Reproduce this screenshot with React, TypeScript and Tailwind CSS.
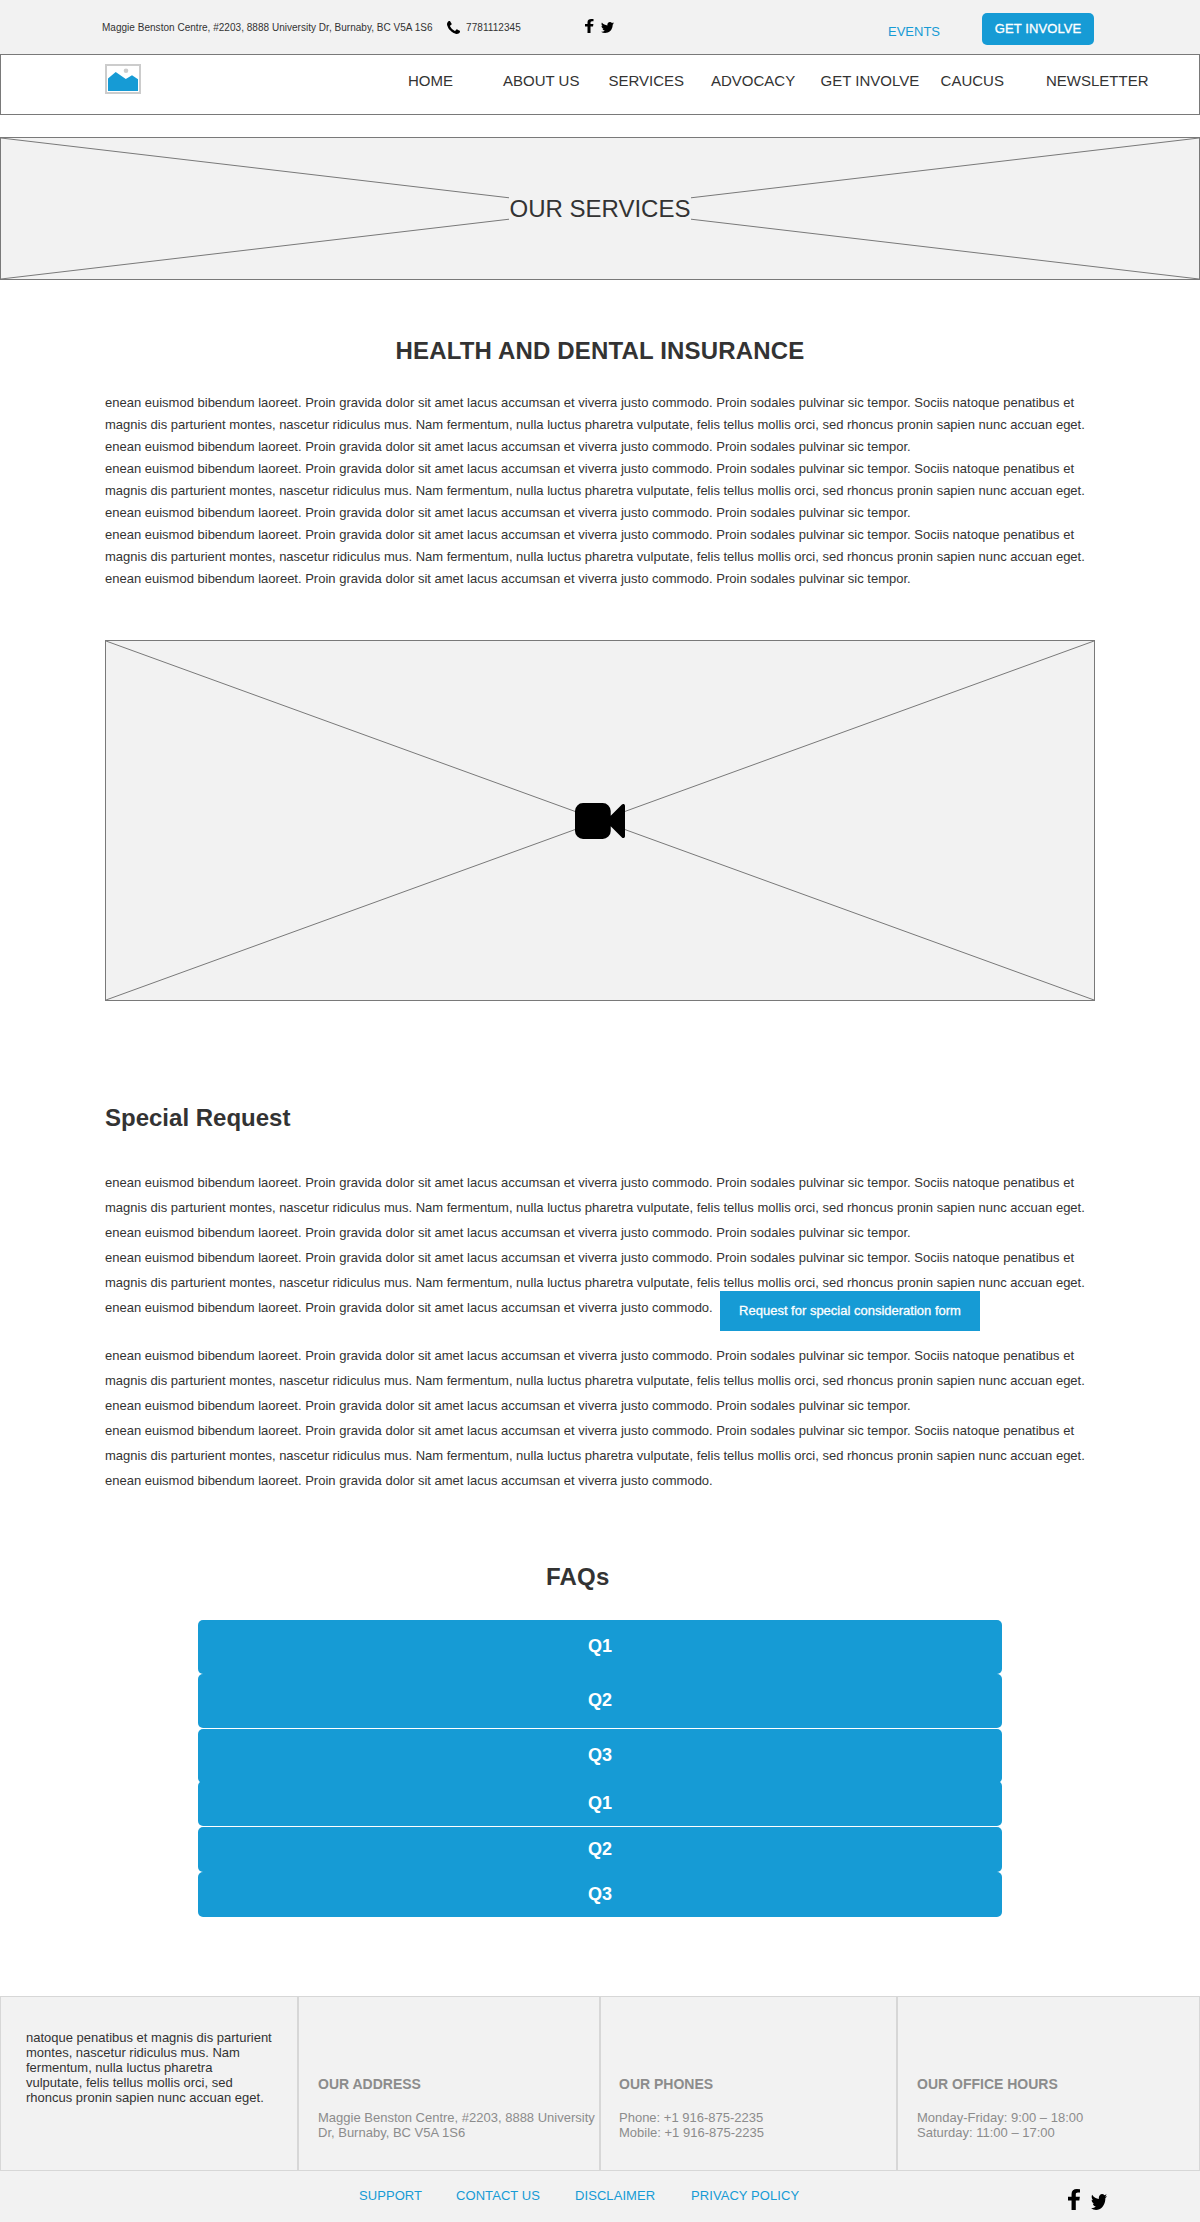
import React from "react";

const LINE_A =
  "enean euismod bibendum laoreet. Proin gravida dolor sit amet lacus accumsan et viverra justo commodo. Proin sodales pulvinar sic tempor. Sociis natoque penatibus et";
const LINE_B =
  "magnis dis parturient montes, nascetur ridiculus mus. Nam fermentum, nulla luctus pharetra vulputate, felis tellus mollis orci, sed rhoncus pronin sapien nunc accuan eget.";
const LINE_C =
  "enean euismod bibendum laoreet. Proin gravida dolor sit amet lacus accumsan et viverra justo commodo. Proin sodales pulvinar sic tempor.";
const LINE_D =
  "enean euismod bibendum laoreet. Proin gravida dolor sit amet lacus accumsan et viverra justo commodo.";

function Lines({ lines }: { lines: string[] }) {
  return (
    <>
      {lines.map((line, i) => (
        <span key={i} className="block whitespace-nowrap">
          {line}
        </span>
      ))}
    </>
  );
}

function FacebookIcon({ className }: { className: string }) {
  return (
    <svg viewBox="479 0 864 1664" preserveAspectRatio="none" className={className} fill="#000">
      <path d="M1343 12v264h-157q-86 0-116 36t-30 108v189h293l-39 296h-254v759h-306v-759h-255v-296h255v-218q0-186 104-288.5t277-102.5q147 0 228 12z" />
    </svg>
  );
}

function TwitterIcon({ className }: { className: string }) {
  return (
    <svg viewBox="108 256 1576 1280" preserveAspectRatio="none" className={className} fill="#000">
      <path d="M1684 408q-67 98-162 167 1 14 1 42 0 130-38 259.5t-115.5 248.5-184.5 210.5-258 146-323 54.5q-271 0-496-145 35 4 78 4 225 0 401-138-105-2-188-64.5t-114-159.5q33 5 61 5 43 0 85-11-112-23-185.5-111.5t-73.5-205.5v-4q68 38 146 41-66-44-105-115t-39-154q0-88 44-163 121 149 294.5 238.5t371.5 99.5q-8-38-8-74 0-134 94.5-228.5t228.5-94.5q140 0 236 102 109-21 205-78-37 115-142 178 93-10 186-50z" />
    </svg>
  );
}

function PhoneIcon({ className }: { className: string }) {
  return (
    <svg viewBox="192 128 1408 1408" className={className} fill="#000">
      <path d="M1600 1240q0 27-10 70.5t-21 68.5q-21 50-122 106-94 51-186 51-27 0-53-3.5t-57.5-12.5-47-14.5-55.5-20.5-49-18q-98-35-175-83-127-79-264-216t-216-264q-48-77-83-175-3-9-18-49t-20.5-55.5-14.5-47-12.5-57.5-3.5-53q0-92 51-186 56-101 106-122 25-11 68.5-21t70.5-10q14 0 21 3 18 6 53 76 11 19 30 54t35 63.5 31 53.5q3 4 17.5 25t21.5 35.5 7 28.5q0 20-28.5 50t-62 55-62 53-28.5 46q0 9 5 22.5t8.5 20.5 14 24 11.5 19q76 137 174 235t235 174q2 1 19 11.5t24 14 20.5 8.5 22.5 5q18 0 46-28.5t53-62 55-62 50-28.5q14 0 28.5 7t35.5 21.5 25 17.5q25 15 53.5 31t63.5 35 54 30q70 35 76 53 3 7 3 21z" />
    </svg>
  );
}

function VideoIcon({ className }: { className: string }) {
  return (
    <svg viewBox="0 256 1792 1280" preserveAspectRatio="none" className={className} fill="#000">
      <path d="M1792 352v1088q0 42-39 59-13 5-25 5-27 0-45-19l-403-403v166q0 119-84.5 203.5t-203.5 84.5h-704q-119 0-203.5-84.5t-84.5-203.5v-704q0-119 84.5-203.5t203.5-84.5h704q119 0 203.5 84.5t84.5 203.5v165l403-402q18-19 45-19 12 0 25 5 39 17 39 59z" />
    </svg>
  );
}

function Logo() {
  return (
    <svg viewBox="0 0 36 30" className="mt-[9px] ml-[104px] h-[30px] w-9">
      <rect x="1" y="1" width="34" height="28" fill="#fff" stroke="#ccc" strokeWidth="2" />
      <circle cx="21" cy="6.7" r="2.3" fill="#ccc" />
      <path d="M3 14.5 10.7 8 20.8 15 27 11.3 33 15.3V27H3z" fill="#169bd5" />
    </svg>
  );
}

/* Placeholder panel: a bordered box with two crossing diagonals behind its content. */
function Placeholder({ className, children }: { className: string; children: React.ReactNode }) {
  return (
    <div className={"relative flex justify-center border border-[#797979] bg-[#f2f2f2] " + className}>
      <svg
        className="absolute inset-0 h-full w-full"
        viewBox="0 0 100 100"
        preserveAspectRatio="none"
        stroke="#797979"
        strokeWidth="1"
      >
        <path d="M0 0 100 100M0 100 100 0" vectorEffect="non-scaling-stroke" fill="none" />
      </svg>
      {children}
    </div>
  );
}

function Column({ title, lines, className }: { title: string; lines: string[]; className: string }) {
  return (
    <div className={"border border-[#d7d7d7] pt-[79px] whitespace-nowrap text-[#8c8c8c] " + className}>
      <h3 className="text-[14px] leading-4 font-bold">{title}</h3>
      <p className="mt-[18px] text-[13px] leading-[15px]">
        <Lines lines={lines} />
      </p>
    </div>
  );
}

const faqs = [
  { label: "Q1", cls: "h-[54px]" },
  { label: "Q2", cls: "h-[54px]" },
  { label: "Q3", cls: "mt-px h-[54px]" },
  { label: "Q1", cls: "-mt-[2px] h-[45px]" },
  { label: "Q2", cls: "mt-px h-[45px]" },
  { label: "Q3", cls: "h-[45px]" },
];

export default function App() {
  return (
    <div className="h-[2222px] w-[1200px] overflow-hidden bg-white font-['Liberation_Sans',Arial,sans-serif] text-[#333]">
      <div className="flex h-[54px] items-start bg-[#f2f2f2] whitespace-nowrap">
        <span className="mt-[22px] ml-[102px] w-[345px] text-[10px] leading-3 tracking-[0.025px]">
          Maggie Benston Centre, #2203, 8888 University Dr, Burnaby, BC V5A 1S6
        </span>
        <PhoneIcon className="mt-[21px] h-[13px] w-[13px]" />
        <span className="mt-[22px] ml-[6px] w-[119px] text-[10px] leading-3 tracking-[0.07px]">7781112345</span>
        <FacebookIcon className="mt-[19px] h-[14px] w-[8.5px]" />
        <TwitterIcon className="mt-[22px] ml-[7.5px] h-[11px] w-[13px]" />
        <a className="mt-6 ml-[274px] w-[94px] text-[13px] leading-[15px] text-[#169bd5]">EVENTS</a>
        <button className="mt-[13px] h-8 w-28 rounded-[5px] bg-[#169bd5] pb-[2px] text-[13px] leading-[15px] tracking-[0.1px] text-white [-webkit-text-stroke:0.3px_white]">
          GET INVOLVE
        </button>
      </div>

      <header className="flex h-[61px] items-start border border-[#797979]">
        <Logo />
        <nav className="mt-[17px] ml-[267px] grid grid-cols-[95px_105.5px_102.5px_109.6px_120px_105.4px_auto] text-[15px] leading-[17px] whitespace-nowrap">
          <a>HOME</a>
          <a>ABOUT US</a>
          <a>SERVICES</a>
          <a>ADVOCACY</a>
          <a>GET INVOLVE</a>
          <a>CAUCUS</a>
          <a>NEWSLETTER</a>
        </nav>
      </header>

      <Placeholder className="mt-[22px] h-[143px] items-center">
        <h1 className="relative h-[23px] w-[182px] bg-[#f2f2f2] text-center text-[24px] leading-[23px] whitespace-nowrap">
          OUR SERVICES
        </h1>
      </Placeholder>

      <main>
        <h2 className="mt-[57px] text-center text-[24px] leading-7 font-bold tracking-[0.16px]">
          HEALTH AND DENTAL INSURANCE
        </h2>
        <p className="mt-[27px] ml-[105px] text-[13px] leading-[22px]">
          <Lines lines={[LINE_A, LINE_B, LINE_C, LINE_A, LINE_B, LINE_C, LINE_A, LINE_B, LINE_C]} />
        </p>

        <Placeholder className="mt-[50px] ml-[105px] h-[361px] w-[990px]">
          <div className="relative mt-[162px] h-9 w-[50px] bg-[#f2f2f2]">
            <VideoIcon className="block h-9 w-[50px]" />
          </div>
        </Placeholder>

        <h2 className="mt-[103px] ml-[105px] text-[24px] leading-7 font-bold">Special Request</h2>
        <p className="mt-[38px] ml-[105px] text-[13px] leading-[25px]">
          <Lines lines={[LINE_A, LINE_B, LINE_C, LINE_A, LINE_B]} />
        </p>
        <div className="flex items-start">
          <p className="ml-[105px] w-[615px] text-[13px] leading-[25px] whitespace-nowrap">{LINE_D}</p>
          <button className="-mt-[4px] h-10 w-[260px] bg-[#169bd5] pb-[2px] text-[13px] leading-[15px] whitespace-nowrap text-white [-webkit-text-stroke:0.3px_white]">
            Request for special consideration form
          </button>
        </div>
        <p className="mt-[12px] ml-[105px] text-[13px] leading-[25px]">
          <Lines lines={[LINE_A, LINE_B, LINE_C, LINE_A, LINE_B, LINE_D]} />
        </p>

        <h2 className="mt-[70px] ml-[546px] text-[24px] leading-7 font-bold tracking-[0.2px]">FAQs</h2>
        <div className="mt-[29px] ml-[198px] flex w-[804px] flex-col">
          {faqs.map((faq, i) => (
            <button
              key={i}
              className={"w-full rounded-[5px] bg-[#169bd5] pb-[2px] text-[18px] leading-5 font-bold text-white " + faq.cls}
            >
              {faq.label}
            </button>
          ))}
        </div>
      </main>

      <footer className="mt-[79px] bg-[#f2f2f2]">
        <div className="grid h-[175px] grid-cols-[298px_302px_297px_303px]">
          <div className="border border-[#d7d7d7] pt-[33px] pl-[25px]">
            <p className="text-[13px] leading-[15px]">
              <Lines
                lines={[
                  "natoque penatibus et magnis dis parturient",
                  "montes, nascetur ridiculus mus. Nam",
                  "fermentum, nulla luctus pharetra",
                  "vulputate, felis tellus mollis orci, sed",
                  "rhoncus pronin sapien nunc accuan eget.",
                ]}
              />
            </p>
          </div>
          <Column
            className="pl-[19px]"
            title="OUR ADDRESS"
            lines={["Maggie Benston Centre, #2203, 8888 University", "Dr, Burnaby, BC V5A 1S6"]}
          />
          <Column
            className="pl-[18px]"
            title="OUR PHONES"
            lines={["Phone: +1 916-875-2235", "Mobile: +1 916-875-2235"]}
          />
          <Column
            className="pl-[19px]"
            title="OUR OFFICE HOURS"
            lines={["Monday-Friday: 9:00 – 18:00", "Saturday: 11:00 – 17:00"]}
          />
        </div>
        <div className="flex h-[51px] items-start text-[13px] leading-[15px] whitespace-nowrap text-[#169bd5]">
          <nav className="mt-[17px] ml-[359px] grid w-[708px] grid-cols-[97px_119px_116px_auto] tracking-[0.07px]">
            <a>SUPPORT</a>
            <a>CONTACT US</a>
            <a>DISCLAIMER</a>
            <a>PRIVACY POLICY</a>
          </nav>
          <FacebookIcon className="mt-[18px] ml-[0.5px] h-[21px] w-3" />
          <TwitterIcon className="mt-[23px] ml-[11.5px] h-4 w-4" />
        </div>
      </footer>
    </div>
  );
}
